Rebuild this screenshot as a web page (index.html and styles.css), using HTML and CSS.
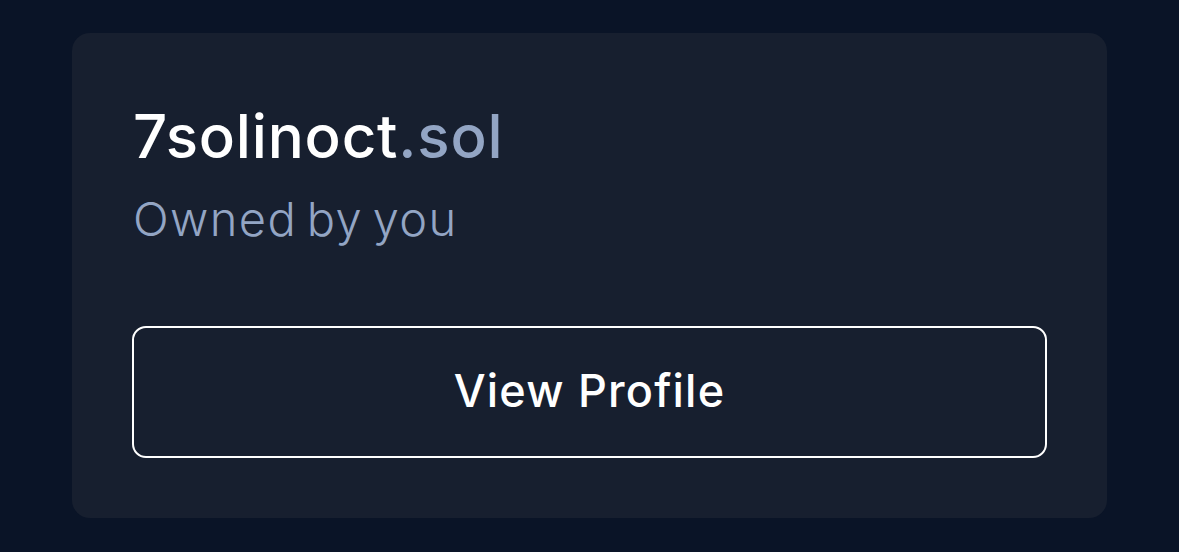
FILE: index.html
```html
<!DOCTYPE html>
<html lang="en">
<head>
<meta charset="utf-8">
<link rel="stylesheet" href="styles.css">
</head>
<body>
<div class="page">
  <div class="card">
    <div class="title">7solinoct<span class="tld">.sol</span></div>
    <div class="owner">Owned by you</div>
    <button class="btn">View Profile</button>
  </div>
</div>
</body>
</html>
```

FILE: styles.css
```css
html, body {
  margin: 0;
  padding: 0;
  background: #0a1427;
}
.page {
  width: 1179px;
  height: 552px;
  padding: 33px 0 0 72px;
  box-sizing: border-box;
}
.card {
  width: 1035px;
  height: 485px;
  box-sizing: border-box;
  background: #171f2f;
  border-radius: 18px;
  padding: 66px 61px 60px 60px;
  display: flex;
  flex-direction: column;
  font-family: Inter, "Noto Sans", sans-serif;
}
.title {
  font-size: 60px;
  line-height: 74px;
  font-weight: 500;
  color: #ffffff;
  letter-spacing: 0.8px;
  padding-left: 1px;
}
.tld {
  color: #93a5c4;
}
.owner {
  font-size: 47px;
  line-height: 60px;
  font-weight: 300;
  color: #93a5c4;
  letter-spacing: 1.4px;
  word-spacing: -5px;
  margin-top: 16px;
  padding-left: 1px;
}
.btn {
  margin-top: 77px;
  width: 915px;
  height: 132px;
  box-sizing: border-box;
  background: transparent;
  border: 2.5px solid #ffffff;
  border-radius: 14px;
  color: #ffffff;
  font-family: Inter, "Noto Sans", sans-serif;
  font-size: 45px;
  font-weight: 500;
  letter-spacing: 1.2px;
  padding: 0 0 4px 0;
}
```
